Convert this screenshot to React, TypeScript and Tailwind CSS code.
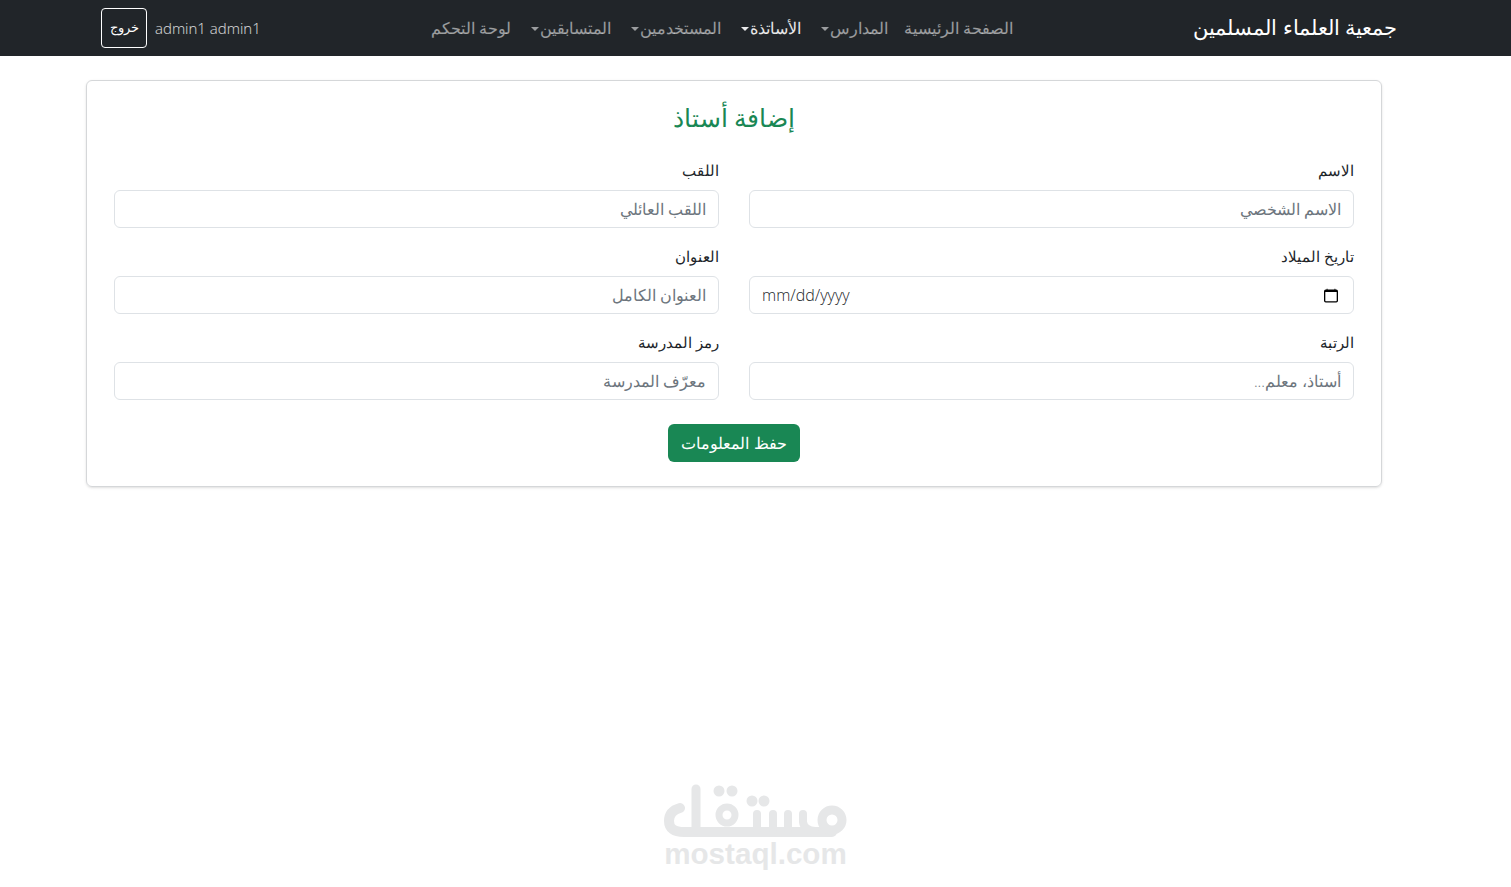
const fields = [
  { label: "الاسم", placeholder: "الاسم الشخصي" },
  { label: "اللقب", placeholder: "اللقب العائلي" },
  { label: "تاريخ الميلاد", date: true },
  { label: "العنوان", placeholder: "العنوان الكامل" },
  { label: "الرتبة", placeholder: "أستاذ، معلم..." },
  { label: "رمز المدرسة", placeholder: "معرّف المدرسة" },
]

const links = [
  { label: "الصفحة الرئيسية" },
  { label: "المدارس", caret: true },
  { label: "الأساتذة", caret: true, active: true },
  { label: "المستخدمين", caret: true },
  { label: "المتسابقين", caret: true },
  { label: "لوحة التحكم" },
]

function Caret() {
  return <span className="inline-block w-0 h-0 border-x-[4px] border-x-transparent border-t-[4px] border-t-current mr-px" />
}

// شعار مستقل في أسفل الصفحة
function Logo() {
  return (
    <svg width="184" height="56" viewBox="664 784 184 56" fill="none" stroke="#e6e7e8" strokeLinecap="round">
      <path strokeWidth="10" d="M680 808Q669 811 669 821Q669 832 684 832H832" />
      <path strokeWidth="9" d="M696 789V830" />
      <circle cx="727" cy="815" r="8" strokeWidth="7" />
      <path strokeWidth="8" d="M757 814V830M773 814V830M788 814V830M803 814V822Q804 830 815 831" />
      <circle cx="832" cy="820" r="10" strokeWidth="9" />
      <circle cx="719" cy="791" r="5.5" fill="#e6e7e8" stroke="none" />
      <circle cx="732" cy="791" r="5.5" fill="#e6e7e8" stroke="none" />
      <circle cx="752" cy="801" r="5.5" fill="#e6e7e8" stroke="none" />
      <circle cx="764" cy="801" r="5.5" fill="#e6e7e8" stroke="none" />
    </svg>
  )
}

export default function App() {
  return (
    <div dir="rtl" className="min-h-[887px] bg-white font-['Open_Sans','Noto_Sans','DejaVu_Sans',sans-serif] font-light text-[#212529]">
      {/* شريط التنقل */}
      <nav className="h-14 bg-[#212529] pr-[114px] pl-[101px] flex items-center">
        <span className="text-white text-[20.7px]">جمعية العلماء المسلمين</span>
        <div className="mr-[180px] pt-0.5 flex gap-4 text-[15.5px] text-white/55">
          {links.map((l) => (
            <span key={l.label} className={`flex items-center ${l.caret ? "pl-1" : ""} ${l.active ? "text-white/90" : ""}`}>
              {l.label}
              {l.caret && <Caret />}
            </span>
          ))}
        </div>
        <span className="mr-auto ml-2 text-white/85 text-[15px]" dir="ltr">admin1 admin1</span>
        <button className="w-[46px] h-10 border border-white rounded text-white text-[13px]">خروج</button>
      </nav>

      {/* بطاقة إضافة أستاذ */}
      <main className="pt-6 mr-[129px]">
        <div className="w-[1296px] h-[407px] border border-[#d5d7d9] rounded-md shadow-sm px-[27px] pt-4">
          <h2 className="text-[25px] text-[#198754] text-center h-[65px] leading-[40px]">إضافة أستاذ</h2>
          <div className="grid grid-cols-2 gap-x-[30px] gap-y-5">
            {fields.map((f) => (
              <div key={f.label}>
                <label className="block h-[28px] leading-4 text-[15px]">{f.label}</label>
                <div className="h-[38px] border border-[#dee2e6] rounded-md px-3 flex items-center justify-between text-[15.5px]">
                  {f.date ? (
                    <>
                      <svg width="14" height="15" viewBox="0 0 16 16" className="text-black mr-[3px]">
                        <path fill="currentColor" d="M3.5 0a.5.5 0 0 1 .5.5V1h8V.5a.5.5 0 0 1 1 0V1h1a2 2 0 0 1 2 2v11a2 2 0 0 1-2 2H2a2 2 0 0 1-2-2V3a2 2 0 0 1 2-2h1V.5a.5.5 0 0 1 .5-.5zM1.5 4v10a.5.5 0 0 0 .5.5h12a.5.5 0 0 0 .5-.5V4z" />
                      </svg>
                      <span dir="ltr" className="text-base">mm/dd/yyyy</span>
                    </>
                  ) : (
                    <input placeholder={f.placeholder} className="w-full pt-0.5 outline-none placeholder:text-[#6c757d]" />
                  )}
                </div>
              </div>
            ))}
          </div>
          <div className="flex justify-center mt-6">
            <button className="w-[132px] h-[38px] rounded-md bg-[#198754] text-white text-base">حفظ المعلومات</button>
          </div>
        </div>
      </main>

      {/* علامة مائية */}
      <div className="mt-[297px] pl-[664px] flex flex-col items-start" dir="ltr">
        <Logo />
        <span className="w-[183px] text-center text-[29.6px] leading-7 font-bold text-[#e6e7e8] font-['Liberation_Sans',sans-serif]">mostaql.com</span>
      </div>
    </div>
  )
}
